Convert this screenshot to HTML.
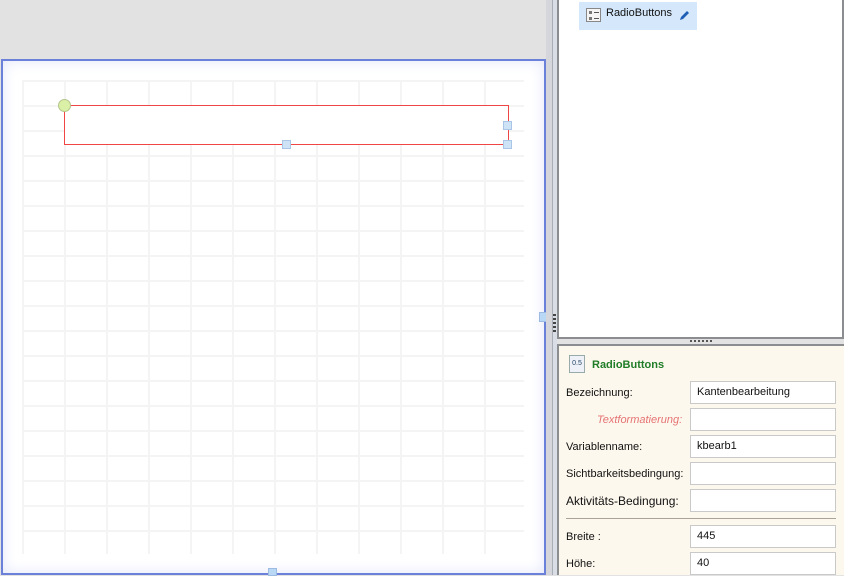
<!DOCTYPE html>
<html><head><meta charset="utf-8"><style>
*{margin:0;padding:0;box-sizing:border-box}
body{width:844px;height:575px;overflow:hidden;background:#e2e2e2;position:relative;font-family:"Liberation Sans","DejaVu Sans",sans-serif;font-size:11px;color:#111}
.abs{position:absolute}
#canvas{left:1px;top:59px;width:545px;height:516px;border:2px solid #6b80d9;background:#fff;box-shadow:inset 0 0 14px #e3e6fa}
#grid{left:22px;top:80px;width:502px;height:474px;
background-image:linear-gradient(to right,#f4f4f4 2px,transparent 2px),linear-gradient(to bottom,#f4f4f4 2px,transparent 2px);
background-size:42px 25px;background-position:0 0}
#strip{left:546px;top:0;width:6px;height:575px;background:#d5d6dc}
#split{left:552px;top:0;width:5px;height:575px;background:#d9dde6;border-left:1px solid #a9adb5}
#top{left:557px;top:0;width:287px;height:339px;background:#fff;border:2px solid #8b8d91;border-top:none}
#bot{left:557px;top:344px;width:287px;height:231px;background:#fdf8ee;border-left:2px solid #8b8d91;border-top:2px solid #8b8d91}
.lbl{position:absolute;left:7px;font-size:11px}
.inp{position:absolute;left:131px;width:146px;height:23px;border:1px solid #c9c9c9;background:#fff;padding:4px 6px;font-size:11px}
</style></head><body>
<div id="canvas" class="abs"></div>
<div id="grid" class="abs"></div>
<div class="abs" style="left:64px;top:105px;width:445px;height:40px;border:1px solid #f04545;background:#fff"></div>
<div class="abs" style="left:58px;top:99px;width:13px;height:13px;border-radius:50%;background:#d9f0a6;border:1px solid #b5c48c"></div>
<div class="abs" style="left:503px;top:121px;width:9px;height:9px;background:#cfe3f7;border:1px solid #a9c6e6"></div>
<div class="abs" style="left:503px;top:140px;width:9px;height:9px;background:#cfe3f7;border:1px solid #a9c6e6"></div>
<div class="abs" style="left:282px;top:140px;width:9px;height:9px;background:#cfe3f7;border:1px solid #a9c6e6"></div>
<div class="abs" style="left:539px;top:312px;width:9px;height:10px;background:#b8d8f6;border:1px solid #9dbbe0"></div>
<div class="abs" style="left:268px;top:568px;width:9px;height:8px;background:#b8d8f6;border:1px solid #9dbbe0"></div>
<div id="strip" class="abs"></div>
<div id="split" class="abs"></div>
<div class="abs" style="left:553px;top:314px;width:3px;height:18px;background:repeating-linear-gradient(#444 0 2px,transparent 2px 4px)"></div>
<div id="top" class="abs">
 <div class="abs" style="left:20px;top:2px;width:118px;height:28px;background:#d5e8fb"></div>
 <div class="abs" style="left:27px;top:8px;width:15px;height:14px;border:1px solid #888;background:#f4f4f4"></div>
 <div class="abs" style="left:30px;top:11px;width:3px;height:3px;background:#777"></div>
 <div class="abs" style="left:30px;top:17px;width:3px;height:3px;background:#777"></div>
 <div class="abs" style="left:35px;top:12px;width:5px;height:1px;background:#555"></div>
 <div class="abs" style="left:35px;top:18px;width:5px;height:1px;background:#555"></div>
 <div class="abs" style="left:47px;top:7px;font-size:11px">RadioButtons</div>
 <svg class="abs" style="left:119px;top:9px" width="13" height="13" viewBox="0 0 13 13"><path d="M2 11 L3 8 L9 2 L11 4 L5 10 Z" fill="#1d5fb5"/></svg>
</div>
<div class="abs" style="left:690px;top:340px;width:22px;height:2px;background:repeating-linear-gradient(to right,#555 0 2px,transparent 2px 4px)"></div>
<div id="bot" class="abs">
 <div class="abs" style="left:10px;top:9px;width:16px;height:18px;border:1px solid #9aa;background:#eef2f8;font-size:7px;color:#246;text-align:center;line-height:16px">0.5</div>
 <div class="abs" style="left:33px;top:13px;font-weight:bold;color:#1f7d27;font-size:11px">RadioButtons</div>
 <div class="lbl" style="top:41px">Bezeichnung:</div><div class="inp" style="top:35px">Kantenbearbeitung</div>
 <div class="lbl" style="top:68px;left:38px;font-style:italic;color:#e57373">Textformatierung:</div><div class="inp" style="top:62px"></div>
 <div class="lbl" style="top:95px">Variablenname:</div><div class="inp" style="top:89px">kbearb1</div>
 <div class="lbl" style="top:122px">Sichtbarkeitsbedingung:</div><div class="inp" style="top:116px"></div>
 <div class="lbl" style="top:148px;font-size:12px">Aktivitäts-Bedingung:</div><div class="inp" style="top:143px"></div>
 <div class="abs" style="left:7px;top:172px;width:270px;height:1px;background:#a9a39a"></div>
 <div class="lbl" style="top:185px">Breite :</div><div class="inp" style="top:179px">445</div>
 <div class="lbl" style="top:212px">Höhe:</div><div class="inp" style="top:206px">40</div>
</div>
</body></html>
